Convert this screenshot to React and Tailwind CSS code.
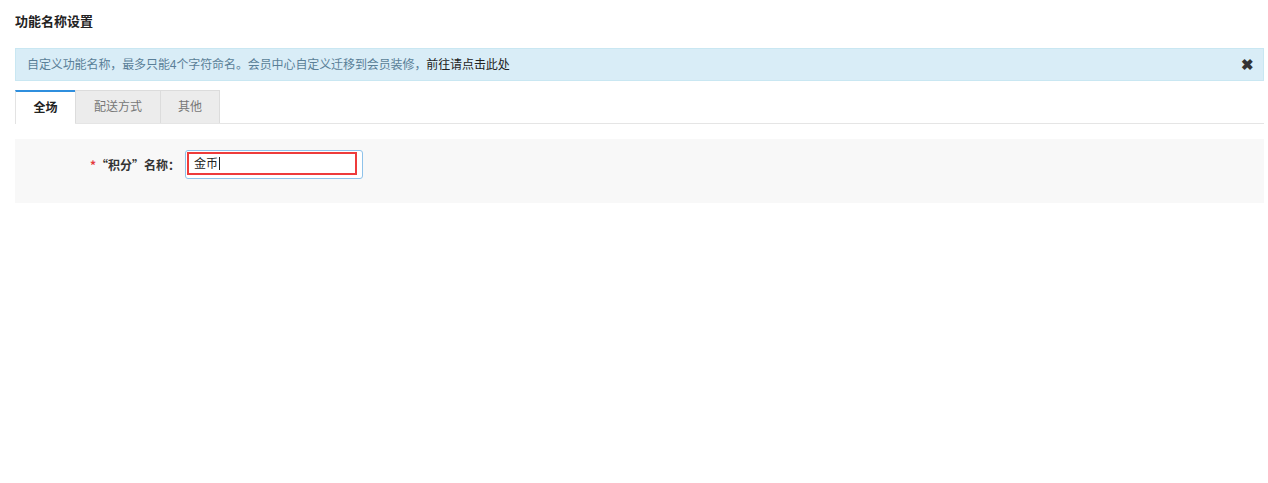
import React from "react"

const font = { fontFamily: '"Liberation Sans", "Noto Sans CJK SC", sans-serif' }
const cjk = { fontFamily: '"Noto Sans CJK SC", sans-serif' }

const tabs = ["全场", "配送方式", "其他"]

const App = () => {
  return (
    <div className="min-h-screen bg-white pl-[15px] pr-[4px]" style={font}>
      <h1 className="pt-[13px] text-[13px] font-bold leading-[18px] text-[#222]">
        功能名称设置
      </h1>

      {/* Notice */}
      <div className="mt-[17px] flex h-[33px] items-center justify-between border border-[#c9e7f2] bg-[#d9edf7] pl-[11px] pr-[9px] text-[12px] text-[#5a7f98]">
        <p className="tracking-[-0.1px]">
          自定义功能名称，最多只能4个字符命名。会员中心自定义迁移到会员装修，
          <span className="text-[#222]">前往请点击此处</span>
        </p>
        <span className="text-[15px] font-bold leading-none text-[#333]">✖</span>
      </div>

      {/* Tabs */}
      <div className="mt-[9px] flex h-[34px] border-b border-[#e5e5e5]">
        {tabs.map((t, i) =>
          i === 0 ? (
            <div
              key={t}
              className="-mb-px flex w-[60px] items-center justify-center border-t-2 border-l border-t-[#2f8fde] border-l-[#e3e3e3] bg-white text-[12px] font-bold text-[#222]"
            >
              {t}
            </div>
          ) : (
            <div
              key={t}
              className={`flex items-center justify-center border-t border-l border-[#dcdcdc] bg-[#ececec] text-[12px] text-[#777] ${
                i === 1 ? "w-[85px]" : "w-[60px] border-r"
              }`}
            >
              {t}
            </div>
          )
        )}
      </div>

      {/* Form panel */}
      <div className="mt-[15px] flex h-[64px] items-start bg-[#f8f8f8] pt-[11px]">
        <label
          className="flex h-[29px] w-[170px] items-center justify-end pr-[5px] text-[12px] font-bold text-[#333]"
          style={cjk}
        >
          <span className="text-[#e4393c]">*</span>“积分”名称：
        </label>
        <div className="h-[29px] w-[178px] rounded-[3px] border border-[#8ec2ea] bg-white p-px pr-[5px]">
          <div className="flex h-[23px] w-[170px] items-center border-2 border-[#ee3b3b] pl-[5px] text-[12px] text-[#222]">
            金币<span className="ml-px h-[13px] w-px bg-[#222]"></span>
          </div>
        </div>
      </div>
    </div>
  )
}

export default App
